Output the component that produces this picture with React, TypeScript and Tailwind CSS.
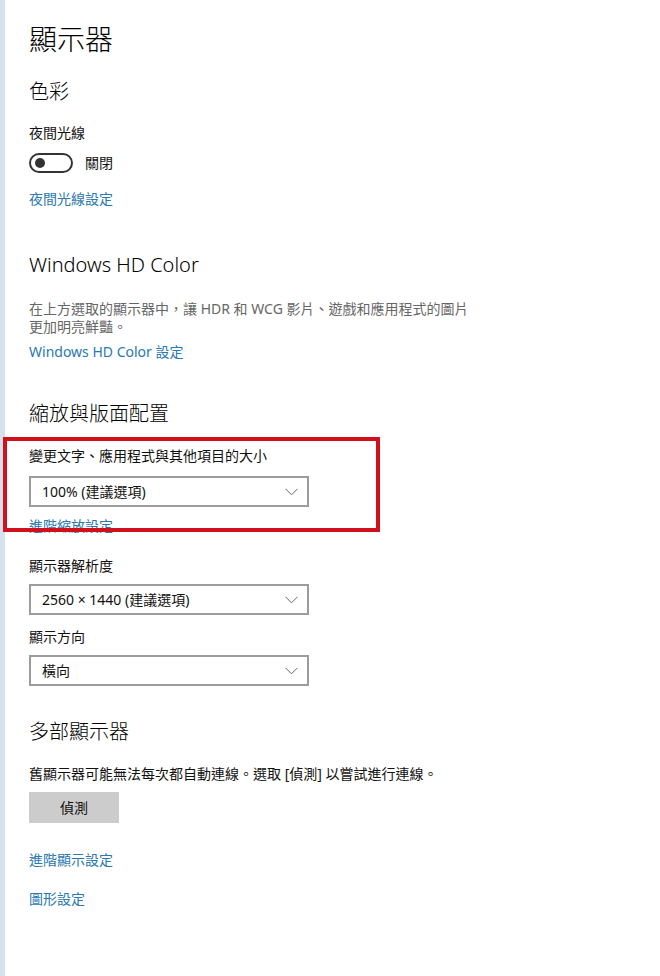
import React from "react";

const font = { fontFamily: '"Noto Sans", "Noto Sans CJK TC", sans-serif' };

function Chevron() {
  return (
    <svg width="13" height="8" viewBox="0 0 13 8" className="text-[#666]">
      <path d="M0.5 0.8 L6.5 6.8 L12.5 0.8" fill="none" stroke="currentColor" strokeWidth="1" />
    </svg>
  );
}

function Dropdown({ value, mt }: { value: string; mt: string }) {
  return (
    <div className={`${mt} flex h-[31px] w-[280px] items-center justify-between border-2 border-[#9c9c9c] bg-white pl-[11px] pr-[9px]`}>
      <span className="text-[14px] leading-none text-[#111]">{value}</span>
      <Chevron />
    </div>
  );
}

export default function App() {
  return (
    <div className="flex min-h-[976px] w-[660px] bg-white" style={font}>
      <div className="w-[5px] shrink-0 bg-[#d3e2ed]" />
      <div className="flex flex-col pl-[24px] pb-[40px]">
        <div className="mt-[25px] h-[29px] text-[28px] font-light leading-none text-black">顯示器</div>
        <div className="mt-[28px] h-[20px] text-[20px] font-light leading-none text-black">色彩</div>
        <div className="mt-[24px] h-[14px] text-[14px] leading-none text-[#111]">夜間光線</div>
        <div className="mt-[13px] flex h-[20px] items-center gap-[12px]">
          <div className="flex h-[20px] w-[44px] items-center rounded-full border-2 border-[#333] pl-[4px]">
            <div className="h-[10px] w-[10px] rounded-full bg-[#333]" />
          </div>
          <span className="text-[14px] leading-none text-[#111]">關閉</span>
        </div>
        <div className="mt-[19px] h-[14px] text-[14px] leading-none text-[#2a78b0]">夜間光線設定</div>
        <div className="mt-[49px] h-[22px] text-[20px] font-light leading-none text-black">Windows HD Color</div>
        <div className="mt-[23px] w-[450px] text-[14px] leading-[18px] text-[#666]">
          在上方選取的顯示器中，讓 HDR 和 WCG 影片、遊戲和應用程式的圖片
          <br />
          更加明亮鮮豔。
        </div>
        <div className="mt-[9px] h-[14px] text-[14px] leading-none text-[#2a78b0]">Windows HD Color 設定</div>
        <div className="mt-[45px] h-[20px] text-[20px] font-light leading-none text-black">縮放與版面配置</div>
        <div className="relative flex flex-col">
          <div className="pointer-events-none absolute left-[-26px] top-[13px] h-[95px] w-[377px] border-4 border-[#d0111c]" />
          <div className="mt-[25px] h-[14px] text-[14px] leading-none text-[#111]">變更文字、應用程式與其他項目的大小</div>
          <Dropdown value="100% (建議選項)" mt="mt-[13px]" />
          <div className="mt-[12px] h-[14px] text-[14px] leading-none text-[#2a78b0]">進階縮放設定</div>
        </div>
        <div className="mt-[26px] h-[14px] text-[14px] leading-none text-[#111]">顯示器解析度</div>
        <Dropdown value="2560 × 1440 (建議選項)" mt="mt-[11px]" />
        <div className="mt-[15px] h-[14px] text-[14px] leading-none text-[#111]">顯示方向</div>
        <Dropdown value="橫向" mt="mt-[11px]" />
        <div className="mt-[36px] h-[20px] text-[20px] font-light leading-none text-black">多部顯示器</div>
        <div className="mt-[25px] h-[14px] text-[14px] leading-none text-[#111]">舊顯示器可能無法每次都自動連線。選取 [偵測] 以嘗試進行連線。</div>
        <div className="mt-[11px] flex h-[31px] w-[90px] items-center justify-center bg-[#cccccc] text-[14px] leading-none text-[#111]">偵測</div>
        <div className="mt-[30px] h-[14px] text-[14px] leading-none text-[#2a78b0]">進階顯示設定</div>
        <div className="mt-[25px] h-[14px] text-[14px] leading-none text-[#2a78b0]">圖形設定</div>
      </div>
    </div>
  );
}
